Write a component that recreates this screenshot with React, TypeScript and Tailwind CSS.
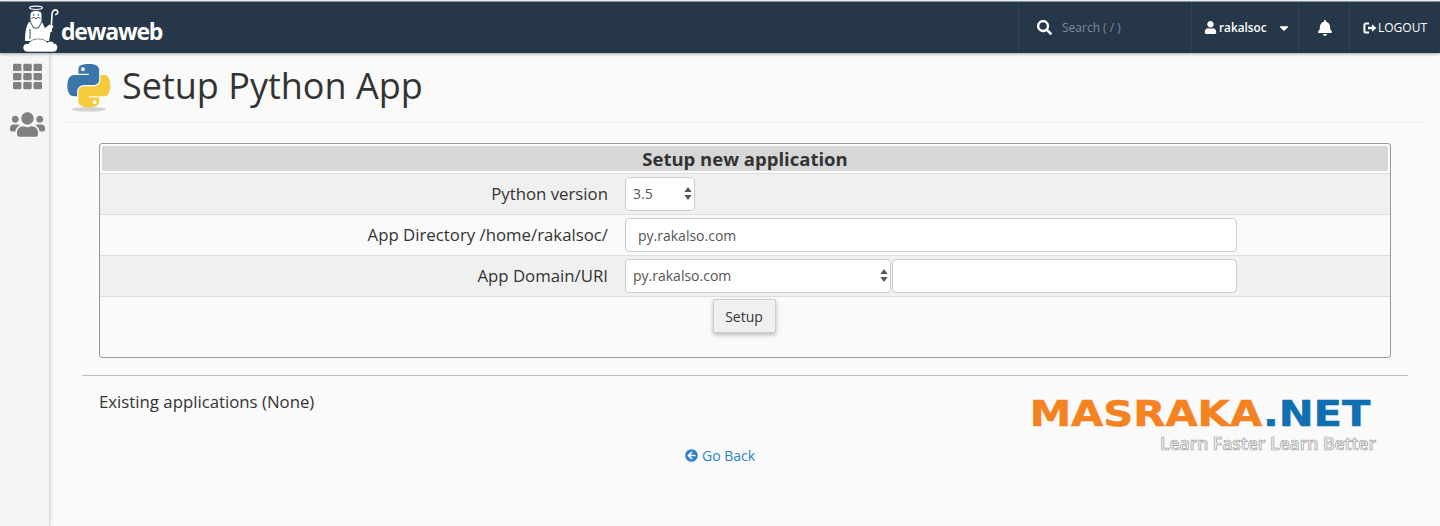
import { FaBell, FaCaretDown, FaSearch, FaTh, FaUser, FaUsers, FaArrowCircleLeft } from "react-icons/fa";

function AngelLogo() {
  return (
    <svg width="37" height="48" viewBox="0 0 37 48" fill="white" className="shrink-0">
      {/* halo */}
      <ellipse cx="14" cy="3.8" rx="6.4" ry="1.7" fill="none" stroke="white" strokeWidth="1.1" />
      {/* staff */}
      <path d="M29 28 L30 11 C30 6 33 5 35 6.5 C36.5 8 35.5 11 33 10.5" fill="none" stroke="white" strokeWidth="1.6" />
      {/* body */}
      <path d="M7 18 C4 22 3 29 3 37 L27 37 L28.5 28 L31.5 22 L27.5 20.5 L23 24 L20 18 Z" />
      {/* head */}
      <path d="M8 11 C8 7.5 11 6.5 14 6.5 C17 6.5 20 7.5 20 11 L20 17 L16.5 24 L11.5 24 L8 17 Z" stroke="#253748" strokeWidth="0.9" />
      <path d="M9.5 14.5 L11.5 13.4 L14 14.5 L16.5 13.4 L18.5 14.5" fill="none" stroke="#253748" strokeWidth="0.9" />
      <circle cx="11.6" cy="11" r="0.8" fill="#253748" />
      <circle cx="16.4" cy="11" r="0.8" fill="#253748" />
      <path d="M8 25 L8 35" stroke="#253748" strokeWidth="0.9" />
      {/* cloud */}
      <path d="M6 48 C2 48 1 45 1 43.5 C1 40.5 4 39 6.5 39.5 C8 36.5 12 35 16 35 C20 35 24 36 25.5 38.5 C27.5 36.5 31 37 32 39.5 C35 39.5 35.5 42 35.5 43.5 C35.5 46 34 48 31 48 Z" stroke="#253748" strokeWidth="0.6" />
    </svg>
  );
}

function PythonLogo() {
  return (
    <svg width="44" height="48" viewBox="0 0 112 124" className="shrink-0">
      <ellipse cx="56" cy="117" rx="44" ry="6" fill="#b8b8b8" opacity="0.6" />
      <path
        fill="#3a76a8"
        fillRule="evenodd"
        d="M54.9 0C50.3 0 46 .4 42.1 1.1 30.8 3.1 28.7 7.3 28.7 15v10.3h26.8v3.4H18.6C10.8 28.7 4 33.3 1.9 42.3c-2.5 10.2-2.6 16.5 0 27.2 1.9 7.9 6.4 13.6 14.2 13.6h9.2V70.8c0-8.8 7.7-16.6 16.8-16.6h26.8c7.4 0 13.4-6.1 13.4-13.6V15c0-7.2-6.1-12.7-13.4-13.9C64.3.3 59.5 0 54.9 0zM40.4 8.2c2.8 0 5 2.3 5 5.1 0 2.8-2.3 5.1-5 5.1-2.8 0-5-2.3-5-5.1 0-2.8 2.3-5.1 5-5.1z"
      />
      <path
        fill="#f5cb3c"
        fillRule="evenodd"
        d="M85.6 28.7v11.9c0 9.2-7.8 17-16.7 17H42.1c-7.3 0-13.4 6.3-13.4 13.6v25.5c0 7.3 6.3 11.5 13.4 13.6 8.5 2.5 16.6 3 26.8 0 6.8-2 13.4-5.9 13.4-13.6V86.5H55.5v-3.4h40.2c7.8 0 10.7-5.4 13.4-13.6 2.8-8.4 2.7-16.5 0-27.2-1.9-7.8-5.6-13.6-13.4-13.6H85.6zM70.6 93.3c2.8 0 5 2.3 5 5.1 0 2.8-2.3 5.1-5 5.1-2.8 0-5-2.3-5-5.1 0-2.8 2.3-5.1 5-5.1z"
      />
    </svg>
  );
}

function LogoutIcon() {
  return (
    <svg width="14" height="12" viewBox="0 0 14 12" fill="none" className="shrink-0">
      <path d="M6 1.5 H3 A1.6 1.6 0 0 0 1.4 3.1 V8.9 A1.6 1.6 0 0 0 3 10.5 H6" stroke="white" strokeWidth="2" />
      <path d="M5 4.8 H9 V2.2 L13.4 6 L9 9.8 V7.2 H5 Z" fill="white" />
    </svg>
  );
}

function SelectBox({ value, className }: { value: string; className: string }) {
  return (
    <div className={`relative h-[34px] ${className}`}>
      <select
        defaultValue={value}
        className="h-full w-full appearance-none rounded-[4px] border border-[#ccc] bg-white pb-[2px] pl-[7px] text-[14px] text-[#555] outline-none"
      >
        <option>{value}</option>
      </select>
      <svg width="8" height="13" viewBox="0 0 8 13" className="pointer-events-none absolute right-[3px] top-[10px] fill-[#555]">
        <path d="M4 0 L7.6 5 H.4 Z M4 13 L.4 8 H7.6 Z" />
      </svg>
    </div>
  );
}

function FormRow({ label, shaded, children }: { label: string; shaded?: boolean; children: React.ReactNode }) {
  return (
    <div className={`flex h-[41px] items-center border-b border-[#ddd] ${shaded ? "bg-[#f0f0f0]" : ""}`}>
      <div className="w-[508px] shrink-0 text-right text-[16.8px] text-[#333]">{label}</div>
      <div className="ml-[17px] flex items-center gap-px">{children}</div>
    </div>
  );
}

export default function App() {
  return (
    <div className="flex h-[526px] w-[1440px] flex-col overflow-hidden bg-[#fafafa] font-['Open_Sans',sans-serif] text-[#333]">
      <header className="z-10 mt-px flex h-[52px] shrink-0 items-center justify-between border-t border-[#8a949d] bg-[#253748] shadow-[0_1px_3px_rgba(0,0,0,0.35)]">
        <div className="ml-[22px] flex items-center">
          <AngelLogo />
          <span className="ml-[2px] mt-[7px] text-[23px] font-bold leading-none tracking-[-1.2px] text-white">dewaweb</span>
        </div>
        <div className="flex h-full items-stretch text-[12px] text-white">
          <div className="flex w-[173px] items-center border-l border-[#2f4356] pl-[18px]">
            <FaSearch className="text-[15px]" />
            <span className="ml-[10px] text-[#7f8b97]">Search ( / )</span>
          </div>
          <div className="flex w-[107px] items-center border-l border-[#2f4356] pl-[12px]">
            <FaUser className="text-[13px]" />
            <span className="ml-[2px] text-[11.8px] font-semibold">rakalsoc</span>
            <FaCaretDown className="ml-[10px] text-[14px]" />
          </div>
          <div className="flex w-[51px] items-center justify-center border-l border-[#2f4356] pl-px">
            <FaBell className="text-[16px]" />
          </div>
          <div className="flex w-[91px] items-center border-l border-[#2f4356] pl-[13px]">
            <LogoutIcon />
            <span className="ml-px">LOGOUT</span>
          </div>
        </div>
      </header>

      <div className="flex min-h-0 flex-1">
        <aside className="flex w-[50px] shrink-0 flex-col items-center border-r border-[#ddd] bg-[#f5f5f5] pl-[6px] pt-[9px] text-[#808080] shadow-[1px_0_3px_rgba(0,0,0,0.12)]">
          <FaTh className="text-[29px]" />
          <FaUsers className="mt-[16px] text-[35px]" />
        </aside>

        <main className="min-w-0 flex-1">
          <div className="ml-[15px] mr-[15px] flex h-[70px] items-center border-b border-[#eee] pl-[2px]">
            <PythonLogo />
            <h1 className="mb-[4px] ml-[11px] text-[36px] font-normal leading-none text-[#333]">Setup Python App</h1>
          </div>

          <div className="ml-[49px] mt-[20px] h-[215px] w-[1292px] rounded-[3px] border border-[#999]">
            <div className="border-b border-[#ddd] p-[2px]">
              <div className="flex h-[25px] items-center justify-center rounded-[2px] bg-[#d7d7d7] pt-px text-[18.5px] font-bold leading-none">
                Setup new application
              </div>
            </div>
            <FormRow label="Python version" shaded>
              <SelectBox value="3.5" className="w-[70px]" />
            </FormRow>
            <FormRow label="App Directory /home/rakalsoc/">
              <input
                defaultValue="py.rakalso.com"
                className="h-[34px] w-[612px] rounded-[4px] border border-[#ccc] bg-white px-[12px] text-[14px] text-[#555] outline-none"
              />
            </FormRow>
            <FormRow label="App Domain/URI" shaded>
              <SelectBox value="py.rakalso.com" className="w-[266px]" />
              <input className="h-[34px] w-[345px] rounded-[4px] border border-[#ccc] bg-white outline-none" />
            </FormRow>
            <div className="flex justify-center pr-[2px] pt-[2px]">
              <button className="h-[34px] w-[63px] rounded-[2px] border border-[#ccc] bg-[#f0f0f0] text-[14px] text-[#333] shadow-[0_2px_4px_rgba(0,0,0,0.25)]">
                Setup
              </button>
            </div>
          </div>

          <div className="ml-[32px] mr-[32px] mt-[17px] border-t border-[#bbb]" />

          <div className="ml-[49px] mr-[64px] mt-[15px] flex items-start justify-between">
            <div className="flex flex-col">
              <p className="text-[16.8px] leading-[22px]">Existing applications (None)</p>
              <div className="ml-[586px] mt-[32px] flex items-center gap-[4px] text-[14px] text-[#2f83c8]">
                <FaArrowCircleLeft className="text-[13px]" />
                <a>Go Back</a>
              </div>
            </div>
            <div className="mt-[9px] flex flex-col items-end">
              <div className="origin-right scale-x-[1.19] pr-[5px] font-['DejaVu_Sans',sans-serif] text-[35px] font-bold leading-[28px] text-[#f58220] [-webkit-text-stroke:0.5px_#f58220]">
                MASRAKA<span className="text-[#0f6fb0] [-webkit-text-stroke:0.5px_#0f6fb0]">.NET</span>
              </div>
              <div className="mt-[4px] text-[17.5px] font-semibold leading-[22px] text-[#fafafa] [-webkit-text-stroke:0.7px_#999]">
                Learn Faster Learn Better
              </div>
            </div>
          </div>
        </main>
      </div>
    </div>
  );
}
